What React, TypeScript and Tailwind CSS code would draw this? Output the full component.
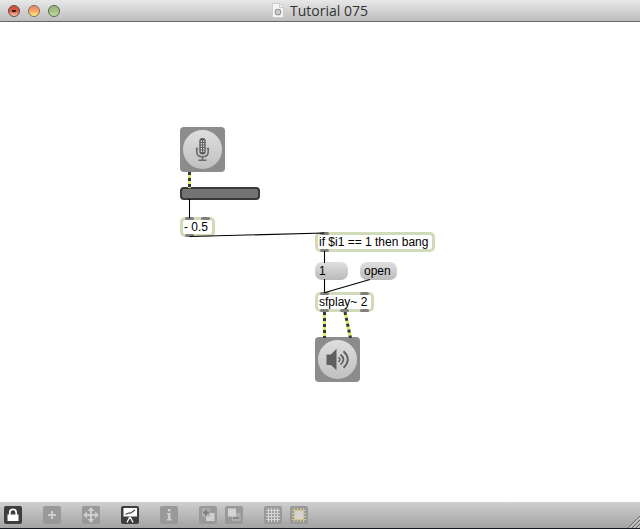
import type { ReactNode } from 'react'

type Point = { x: number; y: number }

function Ports({ at, side }: { at: number[]; side: 'top' | 'bottom' }) {
    return (
        <>
            {at.map((x) => (
                <span
                    key={x}
                    className={`absolute h-[3px] w-[9px] rounded-xs bg-[#808080] ${side === 'top' ? '-top-[3px]' : '-bottom-[3px]'}`}
                    style={{ left: x - 3 }}
                />
            ))}
        </>
    )
}

type ObjectBoxProps = {
    pos: Point
    width: number
    inlets: number[]
    outlets: number[]
    children: ReactNode
}

function ObjectBox({ pos, width, inlets, outlets, children }: ObjectBoxProps) {
    return (
        <div
            className="absolute flex h-5 items-center whitespace-nowrap rounded-[5px] border-3 border-[#d0dbb9] bg-white pl-px text-xs leading-3"
            style={{ left: pos.x, top: pos.y, width }}
        >
            <Ports at={inlets} side="top" />
            {children}
            <Ports at={outlets} side="bottom" />
        </div>
    )
}

function MessageBox({ pos, width, children }: { pos: Point; width: number; children: ReactNode }) {
    return (
        <button
            type="button"
            className="absolute flex h-[18px] items-center rounded-[7px] bg-linear-to-b from-[#e0e0e0] to-[#bababa] pl-1 text-xs leading-3"
            style={{ left: pos.x, top: pos.y, width }}
        >
            {children}
        </button>
    )
}

function AudioButton({ pos, label, children }: { pos: Point; label: string; children: ReactNode }) {
    return (
        <button
            type="button"
            aria-label={label}
            className="absolute flex size-[45px] items-center justify-center rounded-sm bg-[#8c8c8c]"
            style={{ left: pos.x, top: pos.y }}
        >
            <span className="flex size-[39px] items-center justify-center rounded-full bg-linear-to-b from-[#dedede] to-[#c0c0c0]">
                {children}
            </span>
        </button>
    )
}

function MicIcon() {
    return (
        <svg width="15" height="25" viewBox="0 0 15 25" fill="none">
            <rect x="4.3" y="1" width="6.4" height="16.5" rx="3" fill="#5c5e5c" />
            <path d="M6.4 3.5v12M8.7 3.5v12" stroke="#e4e4e4" strokeWidth="1.2" strokeDasharray="1.4 1.1" />
            <path d="M1.8 11v4c0 3 2.2 4.8 5.7 4.8s5.7-1.8 5.7-4.8v-4" stroke="#6a6a6a" strokeWidth="1.6" />
            <path d="M0.8 11.5h2.4M11.8 11.5h2.4M7.5 19.5v4M3.5 23.3h8" stroke="#6a6a6a" strokeWidth="1.6" />
        </svg>
    )
}

function SpeakerIcon() {
    return (
        <svg width="25" height="23" viewBox="0 0 25 23" fill="none">
            <path d="M1.5 6.5H6L11.5 .8v21.4L6 17H1.5z" fill="#5e605e" />
            <path d="M13.5 9.3q3 2.2 0 4.6" stroke="#5e605e" strokeWidth="1.5" />
            <path d="M15.5 6.5q6 5 0 10.2" stroke="#5e605e" strokeWidth="1.7" />
            <path d="M18.5 3.3q8.500 8.200 0 16.500" stroke="#5e605e" strokeWidth="1.9" />
        </svg>
    )
}

const cords = ['M189.5 177v19', 'M189.5 214.5L324.5 211', 'M324.5 229v12', 'M324.5 257v14', 'M370 257.5L325 270.5']
const signals = ['M189.5 150v16', 'M324.5 290v26', 'M345 290l5.5 26']

function PatchCords() {
    return (
        <svg className="pointer-events-none absolute inset-0 size-full" fill="none">
            {cords.map((d) => (
                <path key={d} d={d} stroke="#000" strokeWidth="1.1" />
            ))}
            {signals.map((d) => (
                <g key={d}>
                    <path d={d} stroke="#d9ea62" strokeWidth="3" />
                    <path d={d} stroke="#353535" strokeWidth="3" strokeDasharray="3 3" />
                </g>
            ))}
        </svg>
    )
}

function TitleBar() {
    return (
        <header className="relative flex h-[22px] shrink-0 items-center justify-center border-b border-[#666] bg-linear-to-b from-[#e8e8e8] to-[#bdbdbd]">
            <div className="absolute left-2 flex gap-2">
                <button type="button" aria-label="Close" className="flex size-3 items-center justify-center rounded-full border border-[#70483f] bg-linear-to-b from-[#c4543c] via-[#d8593a] to-[#f8c8b4]">
                    <span className="h-0.5 w-1 rounded-full bg-[#32100c]" />
                </button>
                <button type="button" aria-label="Minimize" className="size-3 rounded-full border border-[#8a6a50] bg-linear-to-b from-[#e08a6c] via-[#f9a468] to-[#eef780]" />
                <button type="button" aria-label="Zoom" className="size-3 rounded-full border border-[#59684e] bg-linear-to-b from-[#9db38c] via-[#a3c282] to-[#c4dea0]" />
            </div>
            <div className="flex items-center gap-1.5">
                <svg width="12" height="15" viewBox="0 0 12 15" fill="none">
                    <path d="M.5.5h7l4 4v10H.5z" fill="#f5f5f5" stroke="#ccc" />
                    <path d="M7.5.5v4h4" stroke="#ccc" />
                    <circle cx="6" cy="9" r="2.7" fill="#ddd" stroke="#999" strokeWidth="1.3" />
                    <path d="M5.5 7.5l1 1-1 1.5" stroke="#aaa" />
                </svg>
                <h1 className="font-['Open_Sans','Noto_Sans',sans-serif] text-sm leading-4 text-[#333]">Tutorial 075</h1>
            </div>
        </header>
    )
}

function ToolButton({ label, active, children }: { label: string; active?: boolean; children: ReactNode }) {
    return (
        <button
            type="button"
            aria-label={label}
            className={`size-[18px] rounded-xs ${active ? 'bg-[#3e3e3e]' : 'bg-[#999]'}`}
        >
            <svg width="18" height="18" viewBox="0 0 18 18" fill="none">
                {children}
            </svg>
        </button>
    )
}

function Toolbar() {
    return (
        <footer className="relative flex h-[27px] shrink-0 items-center gap-[21px] border-b border-[#151522] bg-linear-to-b from-[#cfcfcf] to-[#a3a3a3] px-1">
            <ToolButton label="Lock" active>
                <path d="M5.8 9V6.5a3.2 3.2 0 0 1 6.400 0V9" stroke="#fff" strokeWidth="1.7" />
                <path d="M3.5 8.500h11V15h-11z" fill="#fff" />
            </ToolButton>
            <ToolButton label="New object">
                <path d="M9 5v8M5 9h8" stroke="#cecece" strokeWidth="2" />
            </ToolButton>
            <ToolButton label="Move">
                <path d="M9 4v10M4 9h10" stroke="#cecece" strokeWidth="2" />
                <path d="M9 1l3.500 4h-7zM9 17l3.500-4h-7zM1 9l4-3.500v7zM17 9l-4-3.500v7z" fill="#cecece" />
            </ToolButton>
            <ToolButton label="Presentation" active>
                <path d="M2.500 2h13.500v8.500H2.500z" fill="#fff" />
                <path d="M4.500 8.500l3-1.500 2 .2L14 4" stroke="#444" strokeWidth="1.2" />
                <path d="M9 10.500V13M8.500 11.500L6 16.500M9.500 11.500l2.500 5" stroke="#fff" strokeWidth="1.3" />
            </ToolButton>
            <ToolButton label="Inspector">
                <path d="M8 3h2.500v2.500H8zM7 7h3.500v7H8V8.500H7zM7 13h4.500v1.500H7z" fill="#cecece" />
            </ToolButton>
            <div className="flex gap-2">
                <ToolButton label="Bring to front">
                    <path d="M7 7h8.500v8H7z" fill="#d0d0d0" />
                    <path d="M3 2.500h8v8H3z" fill="#b2b2b2" />
                    <path d="M7 3.500v6M4 6.500h6" stroke="#7c7c7c" strokeWidth="1.8" />
                </ToolButton>
                <ToolButton label="Send to back">
                    <path d="M7 7h8.500v8H7z" fill="#aeaeae" />
                    <path d="M3 2.500h8v8H3z" fill="#d4d4d4" />
                    <path d="M8 12h6" stroke="#808080" strokeWidth="1.7" />
                </ToolButton>
            </div>
            <div className="flex gap-2">
                <ToolButton label="Grid">
                    <path d="M4.500 2v14M7.500 2v14M10.500 2v14M13.500 2v14M2 4.500h14M2 7.500h14M2 10.500h14M2 13.500h14" stroke="#d4d4d4" strokeWidth="1.2" />
                </ToolButton>
                <ToolButton label="Snap to grid">
                    <path d="M4.500 2v14M7.500 2v14M10.500 2v14M13.500 2v14M2 4.500h14M2 7.500h14M2 10.500h14M2 13.500h14" stroke="#d2c391" strokeWidth="1.2" />
                    <path d="M5 5h8v8H5z" fill="#d4d4d4" />
                </ToolButton>
            </div>
            <svg className="absolute bottom-0 right-0" width="12" height="12" fill="none">
                <path d="M0 12L12 0M4 12l8-8M8 12l4-4" stroke="#666" />
                <path d="M1.5 12L12 1.5M5.5 12L12 5.5M9.5 12L12 9.5" stroke="#ddd" />
            </svg>
        </footer>
    )
}

export default function App() {
    return (
        <div className="flex h-screen flex-col bg-white font-['Liberation_Sans',Arial,sans-serif] text-black">
            <TitleBar />
            <main className="relative flex-1 overflow-hidden">
                <AudioButton pos={{ x: 180, y: 105 }} label="Audio input">
                    <MicIcon />
                </AudioButton>
                <div className="absolute left-[180px] top-[165px] h-[13px] w-20 rounded-sm border-2 border-[#3a3a3a] bg-[#737371]" />
                <ObjectBox pos={{ x: 180, y: 195 }} width={35} inlets={[5, 21]} outlets={[5]}>
                    - 0.5
                </ObjectBox>
                <ObjectBox pos={{ x: 315, y: 210 }} width={120} inlets={[5]} outlets={[5]}>
                    if $i1 == 1 then bang
                </ObjectBox>
                <MessageBox pos={{ x: 315, y: 240 }} width={33}>
                    1
                </MessageBox>
                <MessageBox pos={{ x: 360, y: 240 }} width={37}>
                    open
                </MessageBox>
                <ObjectBox pos={{ x: 315, y: 270 }} width={59} inlets={[5, 45]} outlets={[5, 25, 45]}>
                    sfplay~ 2
                </ObjectBox>
                <AudioButton pos={{ x: 315, y: 315 }} label="Audio output">
                    <SpeakerIcon />
                </AudioButton>
                <PatchCords />
            </main>
            <Toolbar />
        </div>
    )
}
